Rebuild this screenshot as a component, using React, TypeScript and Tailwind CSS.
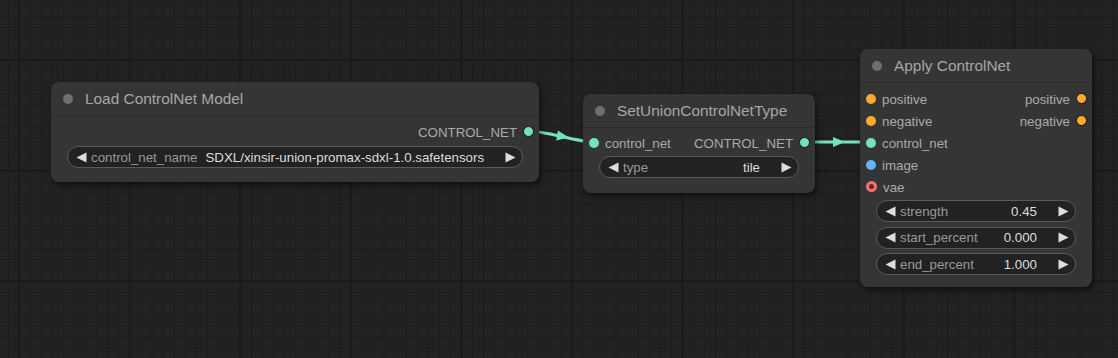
import React from "react";

const FONT = "font-['Liberation_Sans',Arial,sans-serif]";

function Tri({ dir }: { dir: "l" | "r" }) {
  return (
    <svg width="11" height="11" viewBox="0 0 11 11" className="shrink-0">
      {dir === "l" ? (
        <polygon points="0.5,5.5 10.5,0.5 10.5,10.5" fill="#dddddd" />
      ) : (
        <polygon points="10.5,5.5 0.5,0.5 0.5,10.5" fill="#dddddd" />
      )}
    </svg>
  );
}

function Widget({
  label,
  value,
  inline,
}: {
  label: string;
  value: string;
  inline?: boolean;
}) {
  return (
    <div className="mx-[16px] h-[22px] rounded-full border border-[#5a5a5a] bg-[#222222] flex items-center pl-[8px] pr-[6px] text-[13.3px] leading-none">
      <Tri dir="l" />
      <span className="ml-[4px] pt-[1px] text-[#999999]">{label}</span>
      {inline ? (
        <>
          <span className="ml-[8px] pt-[1px] text-[#dddddd] whitespace-nowrap">{value}</span>
          <span className="flex-1" />
        </>
      ) : (
        <>
          <span className="flex-1" />
          <span className="pt-[1px] text-[#dddddd] mr-[21px]">{value}</span>
        </>
      )}
      <Tri dir="r" />
    </div>
  );
}

function Dot({ color, out, hollow }: { color: string; out?: boolean; hollow?: boolean }) {
  if (hollow) {
    return (
      <span className="w-[11px] h-[11px] rounded-full border-[3px] border-[#ff6e6e] bg-[#5a3030] shrink-0" />
    );
  }
  return (
    <span
      className={`rounded-full shrink-0 ${color} ${
        out ? "w-[11px] h-[11px] border-[1.5px] border-[#111111]" : "w-[10px] h-[10px]"
      }`}
    />
  );
}

function Row({
  inLabel,
  inColor,
  outLabel,
  outColor,
  hollow,
}: {
  inLabel?: string;
  inColor?: string;
  outLabel?: string;
  outColor?: string;
  hollow?: boolean;
}) {
  return (
    <div className="h-[22px] flex items-center text-[13.3px] text-[#aaaaaa] leading-none">
      {inLabel ? (
        <div className="flex items-center pl-[6px] gap-[6px]">
          <Dot color={inColor || ""} hollow={hollow} />
          <span className="pt-[1px]">{inLabel}</span>
        </div>
      ) : null}
      <div className="flex-1" />
      {outLabel ? (
        <div className="flex items-center pr-[5px] gap-[6px]">
          <span className="pt-[1px]">{outLabel}</span>
          <Dot color={outColor || ""} out />
        </div>
      ) : null}
    </div>
  );
}

function Node({
  x,
  y,
  w,
  title,
  children,
  pb,
}: {
  x: string;
  y: string;
  w: string;
  title: string;
  children: React.ReactNode;
  pb: string;
}) {
  return (
    <div
      className={`absolute ${x} ${y} ${w} ${pb} rounded-[8px] bg-[#353535] shadow-[2px_3px_6px_rgba(0,0,0,0.55)]`}
    >
      <div className="h-[34px] flex items-center pl-[12px] gap-[12px] border-b border-[#2d2d2d]">
        <span className="w-[10px] h-[10px] rounded-full bg-[#6f6f6f] shrink-0" />
        <span className="text-[15.4px] pt-[1px] text-[#a6a6a6] leading-none">{title}</span>
      </div>
      {children}
    </div>
  );
}

export default function App() {
  const teal = "bg-[#72e3ba]";
  const orange = "bg-[#ffa931]";
  const blue = "bg-[#64b5f6]";
  return (
    <div
      className={`${FONT} relative w-[1118px] h-[358px] overflow-hidden bg-[#222222] [background-image:linear-gradient(to_right,#1a1a1a_2px,transparent_2px),linear-gradient(to_bottom,#1a1a1a_2px,transparent_2px),linear-gradient(to_right,#1c1c1c_1px,transparent_1px),linear-gradient(to_bottom,#1c1c1c_1px,transparent_1px)] [background-size:110.6px_110.6px,110.6px_110.6px,11.06px_11.06px,11.06px_11.06px] [background-position:18px_59px,18px_59px,8px_5px,8px_5px]`}
    >
      <svg className="absolute inset-0" width="1118" height="358">
        <path
          d="M529 131 C 545.5 131, 577.5 142, 594 142"
          stroke="#72e3ba"
          strokeWidth="3.2"
          fill="none"
        />
        <polygon
          points="-6,-5 6,0 -6,5"
          fill="#72e3ba"
          transform="translate(563 136.5) rotate(9)"
        />
        <path d="M806 142 L 871 142" stroke="#72e3ba" strokeWidth="3.2" fill="none" />
        <polygon points="-6,-5 6,0 -6,5" fill="#72e3ba" transform="translate(839 142)" />
      </svg>

      <Node x="left-[51px]" y="top-[82px]" w="w-[488px]" title="Load ControlNet Model" pb="pb-[14px]">
        <div className="pt-[5px]">
          <Row outLabel="CONTROL_NET" outColor={teal} />
        </div>
        <div className="pt-[3px]">
          <Widget
            label="control_net_name"
            value="SDXL/xinsir-union-promax-sdxl-1.0.safetensors"
            inline
          />
        </div>
      </Node>

      <Node x="left-[583px]" y="top-[94px]" w="w-[232px]" title="SetUnionControlNetType" pb="pb-[15px]">
        <div className="pt-[4px]">
          <Row inLabel="control_net" inColor={teal} outLabel="CONTROL_NET" outColor={teal} />
        </div>
        <div className="pt-[2px]">
          <Widget label="type" value="tile" />
        </div>
      </Node>

      <Node x="left-[860px]" y="top-[49px]" w="w-[232px]" title="Apply ControlNet" pb="pb-[12px]">
        <div className="pt-[5px]">
          <Row inLabel="positive" inColor={orange} outLabel="positive" outColor={orange} />
          <Row inLabel="negative" inColor={orange} outLabel="negative" outColor={orange} />
          <Row inLabel="control_net" inColor={teal} />
          <Row inLabel="image" inColor={blue} />
          <Row inLabel="vae" hollow />
        </div>
        <div className="pt-[2px] flex flex-col gap-[4.5px]">
          <Widget label="strength" value="0.45" />
          <Widget label="start_percent" value="0.000" />
          <Widget label="end_percent" value="1.000" />
        </div>
      </Node>
    </div>
  );
}
